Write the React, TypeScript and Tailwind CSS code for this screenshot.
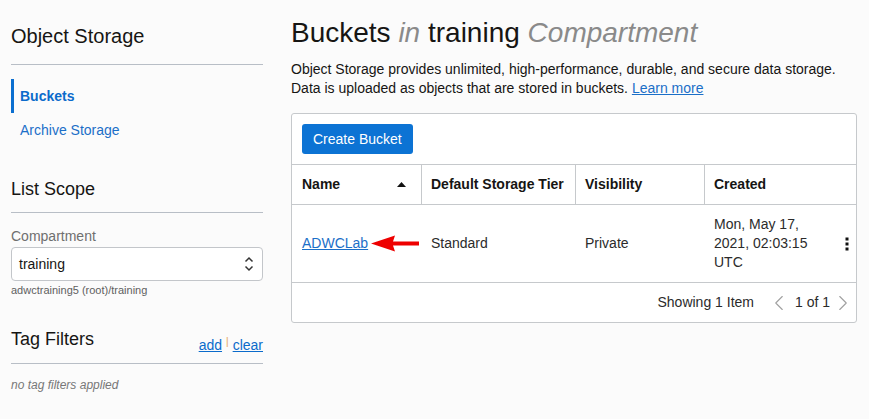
import { ChevronLeft, ChevronRight } from "lucide-react";

function Sidebar() {
  return (
    <aside className="w-[252px] shrink-0 ml-[11px]">
      <h2 className="mt-[24px] text-[20px] leading-6 text-[#161513]">Object Storage</h2>
      <div className="mt-[16px] border-t border-[#b8bec6]" />

      <nav className="mt-[14px] flex flex-col">
        <a className="h-[34px] flex items-center border-l-[3px] border-[#0b6fd0] pl-[6px] text-[14px] font-bold text-[#0b6bcb]">
          Buckets
        </a>
        <a className="h-[34px] flex items-center pl-[9px] text-[14px] text-[#1b6fc8]">
          Archive Storage
        </a>
      </nav>

      <h3 className="mt-[30px] text-[18px] leading-6 text-[#161513]">List Scope</h3>
      <div className="mt-[11px] border-t border-[#b8bec6]" />

      <div className="mt-[13px] text-[14px] leading-5 text-[#6f6f6f]">Compartment</div>
      <div className="mt-[1px] h-[34px] flex items-center justify-between rounded-[4px] border border-[#c3c6ca] bg-white pl-[7px] pr-[8px]">
        <span className="text-[14px] text-[#161513]">training</span>
        <svg width="10" height="16" viewBox="0 0 10 16" fill="none" stroke="#333" strokeWidth="1.5">
          <path d="M1.5 5.5 L5 2 L8.5 5.5" />
          <path d="M1.5 10.5 L5 14 L8.5 10.5" />
        </svg>
      </div>
      <div className="mt-[2px] text-[11px] leading-[14px] text-[#5f5f5f]">
        adwctraining5 (root)/training
      </div>

      <div className="mt-[30px] flex items-end justify-between">
        <h3 className="text-[18px] leading-6 text-[#161513]">Tag Filters</h3>
        <div className="flex items-center gap-[4px] text-[14px] leading-4 text-[#0b6bcb] translate-y-[2px]">
          <a className="underline">add</a>
          <span className="text-[#e3a54a] text-[10px] -mt-[6px]">|</span>
          <a className="underline">clear</a>
        </div>
      </div>
      <div className="mt-[12px] border-t border-[#b8bec6]" />
      <div className="mt-[13px] text-[12px] leading-4 italic text-[#777]">no tag filters applied</div>
    </aside>
  );
}

function BucketTable() {
  const cols = "grid grid-cols-[130px_154px_129px_1fr]";
  return (
    <div className="mt-[15px] rounded-[3px] border border-[#c6c9cc] bg-white">
      <div className="pt-[10px] pb-[10px] pl-[10px]">
        <button className="h-[30px] rounded-[3px] bg-[#0c73d4] px-[11px] text-[14px] text-white">
          Create Bucket
        </button>
      </div>

      <div className={`${cols} h-[40px] border-t border-[#c6c9cc] text-[14px] font-bold text-[#161513]`}>
        <div className="flex items-center justify-between border-r border-[#c6c9cc] pl-[10px] pr-[15px]">
          Name
          <svg width="9" height="5" viewBox="0 0 9 5">
            <path d="M0 5 L4.5 0 L9 5 Z" fill="#111" />
          </svg>
        </div>
        <div className="flex items-center border-r border-[#c6c9cc] pl-[9px]">Default Storage Tier</div>
        <div className="flex items-center border-r border-[#c6c9cc] pl-[9px]">Visibility</div>
        <div className="flex items-center pl-[9px]">Created</div>
      </div>

      <div className={`${cols} h-[78px] border-t border-[#c6c9cc] text-[14px] text-[#2b2b2b]`}>
        <div className="flex items-center pl-[10px]">
          <a className="text-[#1b6fc8] underline">ADWCLab</a>
          <svg width="48" height="17" viewBox="0 0 48 17" className="ml-[3px]">
            <path d="M0 8.5 L24 0.5 L22 6.5 L48 6.5 L48 10.5 L22 10.5 L24 16.5 Z" fill="#ee0000" />
          </svg>
        </div>
        <div className="flex items-center pl-[9px]">Standard</div>
        <div className="flex items-center pl-[9px]">Private</div>
        <div className="flex items-center justify-between pl-[9px] pr-[7px]">
          <div className="leading-[19px]">
            Mon, May 17,
            <br />
            2021, 02:03:15
            <br />
            UTC
          </div>
          <svg width="4" height="14" viewBox="0 0 4 14">
            <rect x="0.5" y="0.5" width="3" height="3" fill="#111" />
            <rect x="0.5" y="5.5" width="3" height="3" fill="#111" />
            <rect x="0.5" y="10.5" width="3" height="3" fill="#111" />
          </svg>
        </div>
      </div>

      <div className="h-[40px] border-t border-[#c6c9cc] flex items-center justify-end pr-[0px] text-[14px] text-[#2b2b2b]">
        <span>Showing 1 Item</span>
        <ChevronLeft className="ml-[12px] h-[26px] w-[26px] text-[#a0a0a0]" strokeWidth={1} />
        <span className="ml-[3px]">1 of 1</span>
        <ChevronRight className="ml-[0px] h-[26px] w-[26px] text-[#a0a0a0]" strokeWidth={1} />
      </div>
    </div>
  );
}

export default function App() {
  return (
    <div className="min-h-screen w-[869px] bg-[#fbfbfb] font-['Liberation_Sans',Arial,sans-serif] flex">
      <Sidebar />
      <main className="ml-[28px] w-[566px] pt-[17px]">
        <h1 className="text-[28px] leading-8 text-[#161513]">
          Buckets <span className="italic text-[#8a8a8a]">in</span> training{" "}
          <span className="italic text-[#8a8a8a]">Compartment</span>
        </h1>
        <p className="mt-[11px] text-[14px] leading-[19px] text-[#161513]">
          Object Storage provides unlimited, high-performance, durable, and secure data storage.
          <br />
          Data is uploaded as objects that are stored in buckets.{" "}
          <a className="text-[#1b6fc8] underline">Learn more</a>
        </p>
        <BucketTable />
      </main>
    </div>
  );
}
